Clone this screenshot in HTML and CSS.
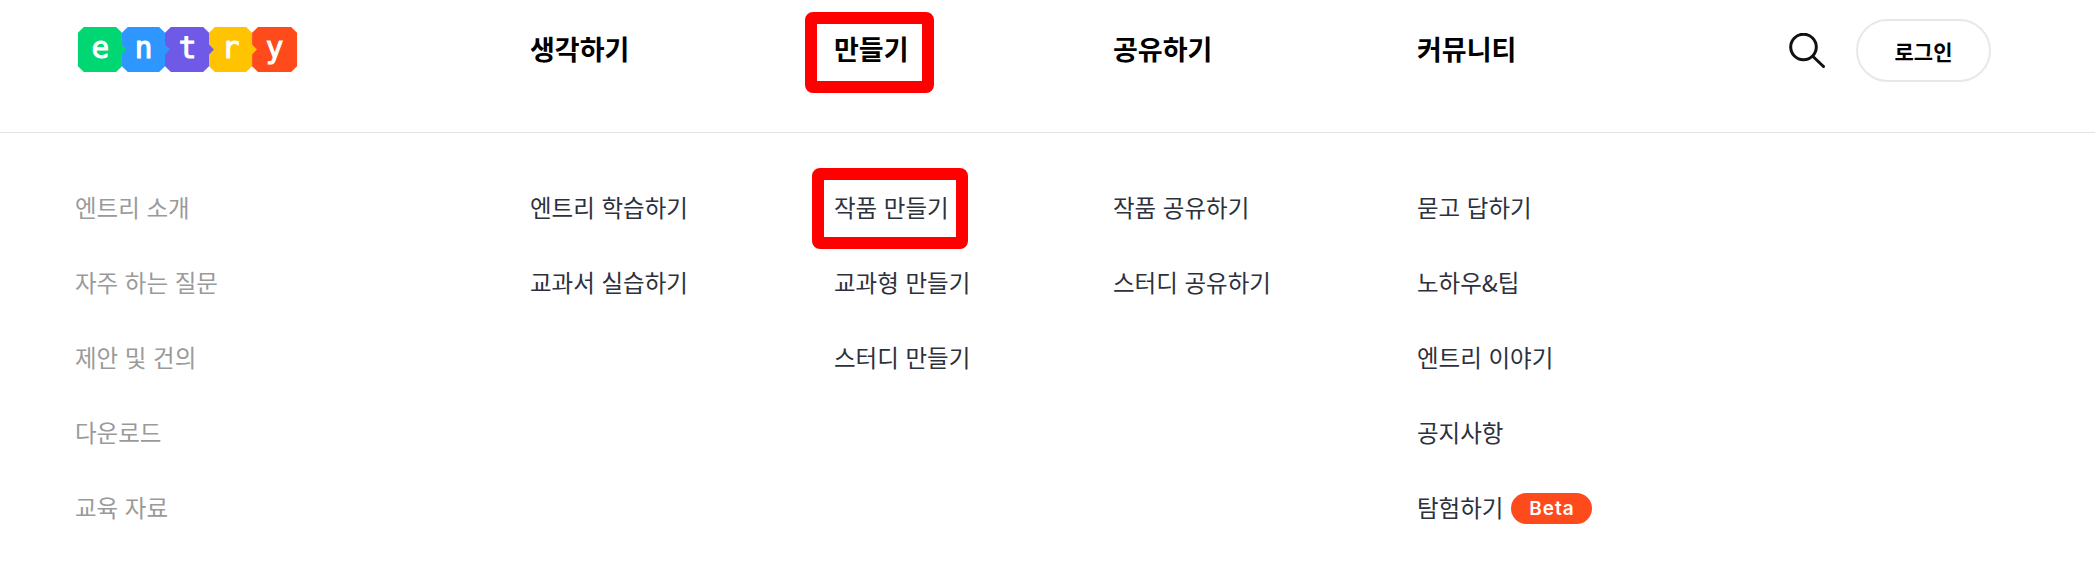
FILE: index.html
```html
<!DOCTYPE html>
<html lang="ko">
<head>
<meta charset="utf-8">
<title>entry</title>
<link rel="stylesheet" href="styles.css">
</head>
<body>
<header class="top grid">
  <a class="logo" aria-label="entry">
    <svg width="223" height="45" viewBox="0 0 224 46">
      <path fill="#ff4a1c" d="M184 0H218L224 6V40L218 46H184L178 40V6Z"/>
      <text class="lt" x="201" y="32">y</text>
      <path fill="#ffc300" d="M140 0H172L178 6V18L183 23L178 28V40L172 46H140L134 40V6Z"/>
      <text class="lt" x="156" y="32">r</text>
      <path fill="#6e5ae6" d="M95 0H128L134 6V18L139 23L134 28V40L128 46H95L89 40V6Z"/>
      <text class="lt" x="112" y="32">t</text>
      <path fill="#2e96ff" d="M51 0H83L89 6V18L94 23L89 28V40L83 46H51L45 40V6Z"/>
      <text class="lt" x="67" y="32">n</text>
      <path fill="#00d672" d="M6 0H39L45 6V18L50 23L45 28V40L39 46H6L0 40V6Z"/>
      <text class="lt" x="23" y="32">e</text>
    </svg>
  </a>
  <a class="main">생각하기</a>
  <a class="main">만들기</a>
  <a class="main">공유하기</a>
  <div class="last">
    <a class="main">커뮤니티</a>
    <div class="actions">
      <svg class="search" width="36" height="36" viewBox="0 0 36 36" fill="none" stroke="#111" stroke-width="3" stroke-linecap="round">
        <circle cx="14.5" cy="14" r="12.8"/>
        <path d="M24 23.5L34.5 33.5"/>
      </svg>
      <button class="login">로그인</button>
    </div>
  </div>
</header>
<nav class="menu grid">
  <ul class="col muted">
    <li>엔트리 소개</li>
    <li>자주 하는 질문</li>
    <li>제안 및 건의</li>
    <li>다운로드</li>
    <li>교육 자료</li>
  </ul>
  <ul class="col">
    <li>엔트리 학습하기</li>
    <li>교과서 실습하기</li>
  </ul>
  <ul class="col">
    <li>작품 만들기</li>
    <li>교과형 만들기</li>
    <li>스터디 만들기</li>
  </ul>
  <ul class="col">
    <li>작품 공유하기</li>
    <li>스터디 공유하기</li>
  </ul>
  <ul class="col">
    <li>묻고 답하기</li>
    <li>노하우&amp;팁</li>
    <li>엔트리 이야기</li>
    <li>공지사항</li>
    <li>탐험하기<span class="beta">Beta</span></li>
  </ul>
</nav>
<div class="mark mark-top"></div>
<div class="mark mark-sub"></div>
</body>
</html>
```
FILE: styles.css
```css
* { box-sizing: border-box; }
html, body { margin: 0; padding: 0; }
body {
  background: #fff;
  height: 564px;
  overflow: hidden;
  position: relative;
  font-family: "Noto Sans CJK KR", "Noto Sans", sans-serif;
  color: #2c313d;
}
.grid {
  display: grid;
  grid-template-columns: 454px 304px 279px 304px 1fr;
  padding-left: 76px;
}
.top {
  height: 133px;
  border-bottom: 1px solid #e2e2e2;
  align-items: center;
}
.logo { display: block; height: 45px; margin-top: -33px; }
.logo svg { display: block; }
.lt {
  font-family: "DejaVu Sans Mono", monospace;
  font-size: 30px;
  font-weight: 400;
  fill: #fff;
  stroke: #fff;
  stroke-width: 1.1px;
  text-anchor: middle;
}
.main {
  font-size: 27px;
  font-weight: 700;
  color: #000;
  line-height: 36px;
  margin-top: -35px;
}
.last { display: flex; align-items: center; padding-right: 104px; justify-content: space-between; }
.actions { display: flex; align-items: center; gap: 31px; margin-top: -31px; }
.search { display: block; }
.login {
  width: 135px;
  height: 63px;
  border: 2px solid #e8e8e8;
  border-radius: 32px;
  background: #fff;
  font-family: inherit;
  font-size: 21px;
  font-weight: 700;
  color: #000;
  padding: 0;
}
.menu { padding-top: 36px; }
.col { list-style: none; margin: 0; padding: 0; }
.col li {
  height: 75px;
  display: flex;
  align-items: center;
  font-size: 23.5px;
  color: #2c313d;
}
.muted { margin-left: -1px; }
.muted li { color: #9a9a9a; }
.beta {
  display: inline-flex;
  align-items: center;
  justify-content: center;
  width: 81px;
  height: 31px;
  margin: 3px 0 0 8px;
  border-radius: 16px;
  background: #ff4a1c;
  color: #fff;
  font-family: "Inter", sans-serif;
  font-size: 19px;
  font-weight: 600;
  letter-spacing: 1px;
}
.mark {
  position: absolute;
  border: 12px solid #f00;
  border-radius: 8px;
}
.mark-top { left: 805px; top: 12px; width: 129px; height: 81px; }
.mark-sub { left: 812px; top: 168px; width: 156px; height: 81px; }
```
